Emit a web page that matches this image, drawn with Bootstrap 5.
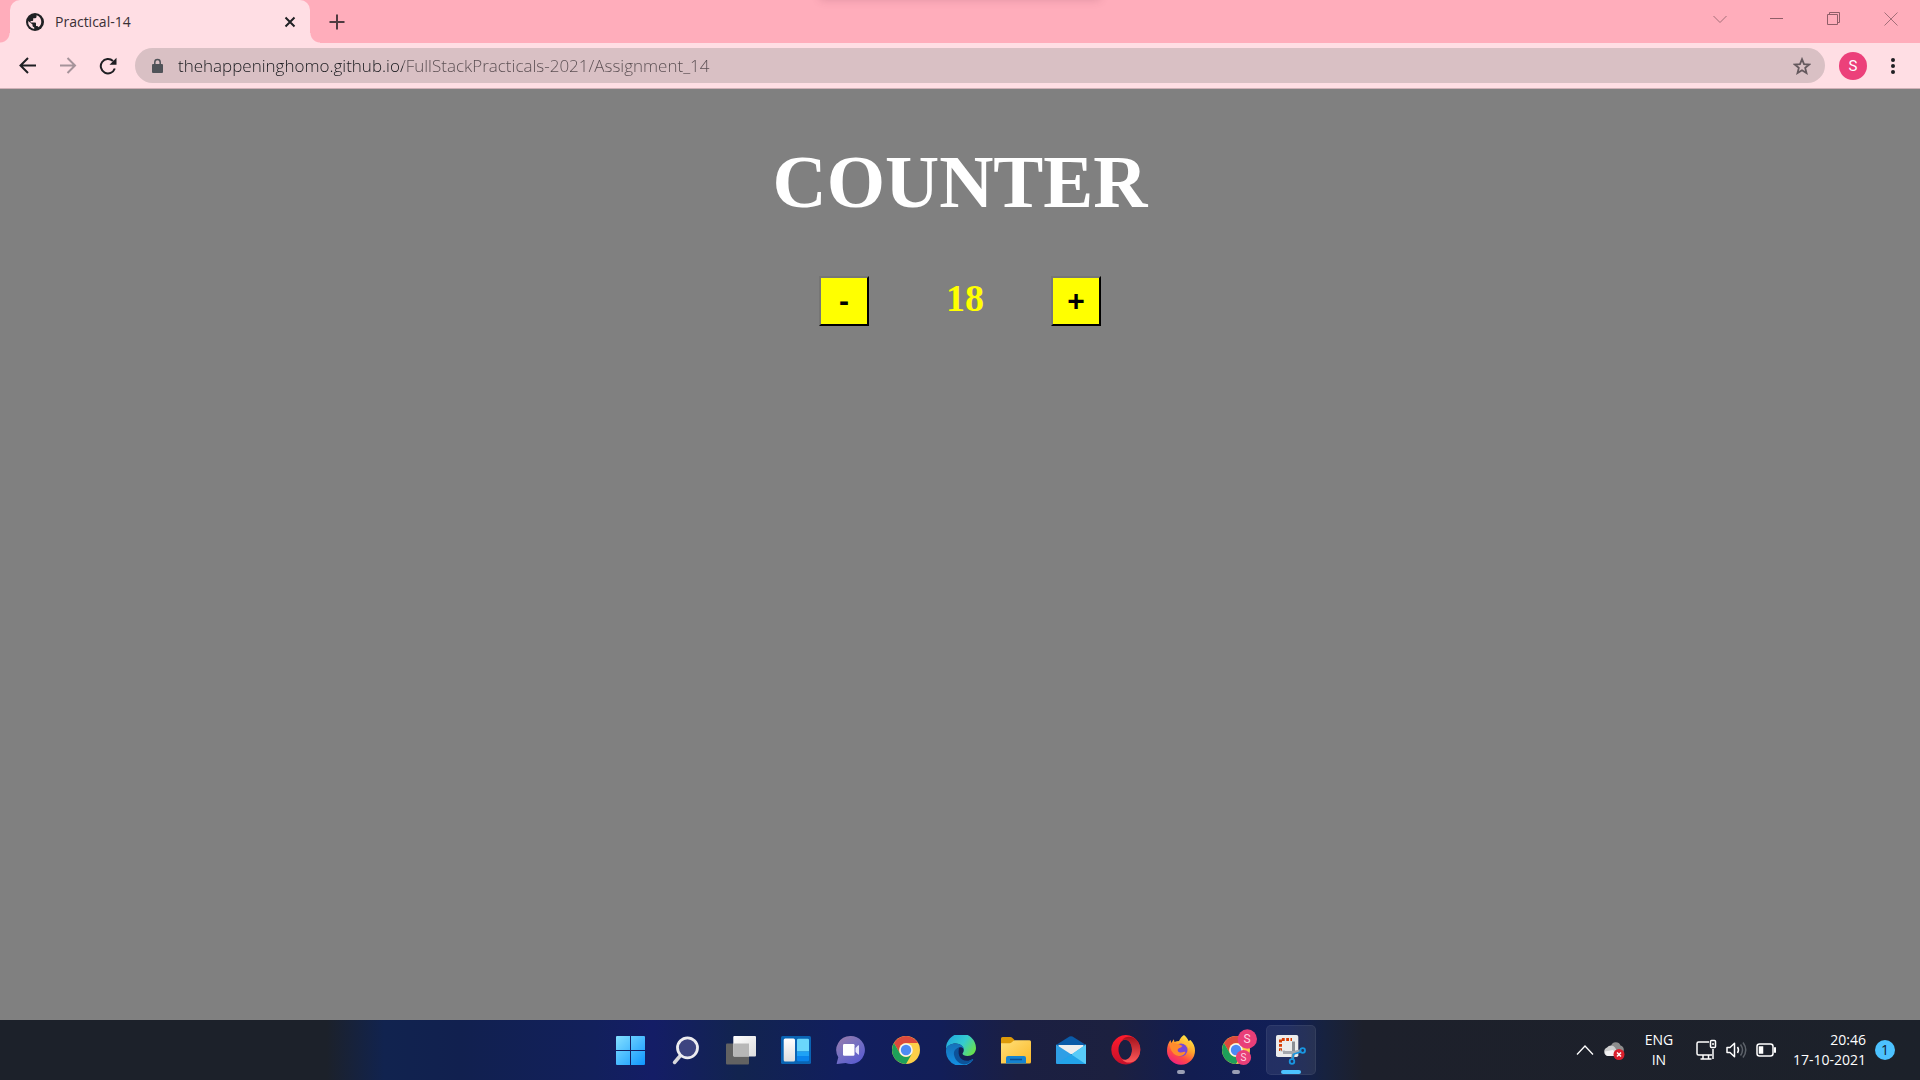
<!DOCTYPE html>
<html lang="en">
<head>
<meta charset="utf-8">
<meta name="viewport" content="width=device-width, initial-scale=1">
<title>Practical-14</title>
<link href="https://cdn.jsdelivr.net/npm/bootstrap@5.3.0/dist/css/bootstrap.min.css" rel="stylesheet">
<style>
  :root { --strip: #ffadbb; --bar: #ffdee4; --pill: #d9c0c4; }
  body { font-family: "Open Sans", "Noto Sans", sans-serif; background: gray; }
  svg { display: block; flex: none; }
  .plain { border: 0; background: none; padding: 0; color: inherit; }

  /* tab strip */
  .tab-strip { background: var(--strip); height: 43px; padding: 0 1px 0 10px; }
  .strip-shadow { top: -10px; left: 50%; width: 280px; height: 10px; margin-left: -140px; box-shadow: 0 0 8px rgba(120,60,80,.22); }
  .browser-tab { width: 300px; background: var(--bar); border-radius: 10px 10px 0 0; padding: 0 14px 0 16px; }
  .browser-tab::before, .browser-tab::after { content: ""; position: absolute; bottom: 0; width: 10px; height: 10px; }
  .browser-tab::before { left: -10px; background: radial-gradient(circle at 0 0, transparent 9px, var(--bar) 10px); }
  .browser-tab::after { right: -10px; background: radial-gradient(circle at 100% 0, transparent 9px, var(--bar) 10px); }
  .tab-title { font-size: 14px; line-height: 20px; color: #3a2f35; margin-left: 11px; }
  .new-tab { width: 54px; color: #4f3a40; }
  .win-btn { width: 57px; height: 37px; color: #a46f79; }

  /* toolbar */
  .tool-bar { background: var(--bar); border-bottom: 1px solid #cfb0b6; padding: 5px 5px 5px 8px; color: #1f1f23; }
  .nav-btn { width: 40px; height: 35px; }
  .url-pill { background: var(--pill); border-radius: 18px; height: 35px; margin-left: 7px; padding: 0 14px 0 16px; }
  .url-box { font-size: 17px; font-weight: 340; line-height: 24px; margin-left: 15px; outline: 0; color: transparent; min-width: 0;
    background: linear-gradient(90deg, #18191d 225px, #584c50 225px); -webkit-background-clip: text; background-clip: text; }
  .avatar { width: 28px; height: 28px; border-radius: 50%; background: #ec407a; color: #fff; font: 15px/28px Roboto, sans-serif; margin-left: 14px; }

  /* counter page */
  .page-title { font: bold 75px/86px "Liberation Serif", serif; color: #fff; margin: 50px 0 51px; }
  .count { font: bold 38px/44px "Liberation Serif", serif; color: #ff0; margin: 0 67px 0 77px; }
  .step-btn { width: 50px; height: 50px; background: #ff0; border: 2px outset #767676; border-right-color: #222; border-bottom-color: #222; color: #000; padding: 0;
    font: bold 30px/34px "Liberation Sans", sans-serif; }

  /* taskbar */
  .task-bar { height: 60px; color: #fff; display: grid; grid-template-columns: 1fr auto 1fr;
    background: linear-gradient(90deg, #1c212a 0, #1c212a 17%, #11234f 20%, #11204f 24%, #12205c 31%, #141d66 34%, #12244f 38.5%, #111e5e 44%, #121e58 49%, #1b1f42 53%, #1c203f 58%, #121d51 62%, #111f57 67%, #17223f 69%, #1d202b 71%, #1c212a 100%); }
  .apps { gap: 5px; padding-left: 2px; }
  .app-btn { width: 50px; height: 50px; border-radius: 5px; }
  .app-btn.current { background: rgba(255,255,255,.08); box-shadow: inset 0 0 0 1px rgba(255,255,255,.06); }
  .app-btn.open::after { content: ""; position: absolute; left: 21px; bottom: 1px; width: 8px; height: 4px; border-radius: 2px; background: #9a9fb5; }
  .app-btn.current::after { left: 15px; width: 20px; background: #4cc2ff; }
  .tray { font-size: 14px; line-height: 20px; padding-right: 25px; }
  .tray-lang { width: 30px; margin: 0 22px 0 18px; }
  .tray-time { margin-left: 17px; }
  .notice { width: 20px; height: 20px; border-radius: 50%; background: #4cc2ff; color: #102030; margin-left: 9px; }
</style>
<script src="https://cdn.jsdelivr.net/npm/bootstrap@5.3.0/dist/js/bootstrap.bundle.min.js"></script>
</head>
<body class="min-vh-100 d-flex flex-column m-0">

<header>
  <div class="tab-strip d-flex position-relative overflow-hidden">
    <div class="strip-shadow position-absolute"></div>
    <div class="browser-tab position-relative d-flex align-items-center">
      <svg width="18" height="18" viewBox="0 0 18 18"><circle cx="9" cy="9" r="9" fill="#202124"/><path d="M10.500 2.200v1.500q0 1.600-1.700 1.600H7.200v1.700q0 .9-.9.900H4.600v1.700h4.500q.9 0 .9.900v2.500h.9q1.200 0 1.700 1.200A6.900 6.900 0 0 0 10.500 2.200zM2.200 8A7 7 0 0 0 8.200 15.900V14.200q-1.700 0-1.700-1.700v-.9z" fill="#ffdee4"/></svg>
      <span class="tab-title flex-grow-1">Practical-14</span>
      <button class="plain" aria-label="Close tab"><svg width="12" height="12" viewBox="0 0 12 12" stroke="#202124" stroke-width="2"><path d="M1.500 1.500l9 9m0-9l-9 9"/></svg></button>
    </div>
    <button class="plain new-tab d-flex align-items-center justify-content-center" aria-label="New tab"><svg width="16" height="16" viewBox="0 0 16 16" stroke="currentColor" stroke-width="2"><path d="M8 .5v15M.5 8h15"/></svg></button>
    <div class="d-flex ms-auto">
      <button class="plain win-btn d-flex align-items-center justify-content-center" aria-label="Search tabs"><svg width="14" height="14" viewBox="0 0 14 14" fill="none" stroke="currentColor"><path d="M.5 4l6.500 6.500L13.500 4"/></svg></button>
      <button class="plain win-btn d-flex align-items-center justify-content-center" aria-label="Minimize"><svg width="14" height="14" viewBox="0 0 14 14" stroke="#8f5e68"><path d="M0 6.500h13"/></svg></button>
      <button class="plain win-btn d-flex align-items-center justify-content-center" aria-label="Restore"><svg width="14" height="14" viewBox="0 0 14 14" fill="none" stroke="#8f5e68"><path d="M.5 2.500h10v10H.5zM2.500 2V.5h10v10H11"/></svg></button>
      <button class="plain win-btn d-flex align-items-center justify-content-center" aria-label="Close"><svg width="14" height="14" viewBox="0 0 14 14" stroke="currentColor"><path d="M.5.5l13 13m0-13l-13 13"/></svg></button>
    </div>
  </div>

  <div class="tool-bar d-flex align-items-center">
    <button class="plain nav-btn d-flex align-items-center justify-content-center" aria-label="Back"><svg width="18" height="18" viewBox="0 0 18 18" fill="none" stroke="currentColor" stroke-width="2"><path d="M17 8.500H2M9 1L1.500 8.500 9 16"/></svg></button>
    <button class="plain nav-btn d-flex align-items-center justify-content-center" aria-label="Forward"><svg width="18" height="18" viewBox="0 0 18 18" fill="none" stroke="#a5939a" stroke-width="2"><path d="M1 8.500h15M8.500 1L16 8.500 8.500 16"/></svg></button>
    <button class="plain nav-btn d-flex align-items-center justify-content-center" aria-label="Reload"><svg width="18" height="18" viewBox="0 0 18 18"><path d="M15.800 11.500A7.200 7.200 0 1 1 14 4" fill="none" stroke="currentColor" stroke-width="2"/><path d="M17.500.8v7h-7z" fill="currentColor"/></svg></button>
    <div class="url-pill d-flex flex-grow-1 align-items-center">
      <svg width="12" height="16" viewBox="0 0 12 16"><rect x="1" y="6" width="11" height="9" rx="1" fill="#505359"/><path d="M3.800 7V4.200a2.700 2.700 0 0 1 5.400 0V7" fill="none" stroke="#505359" stroke-width="1.500"/></svg>
      <input class="plain url-box flex-grow-1" type="text" aria-label="Address" spellcheck="false" value="thehappeninghomo.github.io/FullStackPracticals-2021/Assignment_14">
      <button class="plain" aria-label="Bookmark this page"><svg width="18" height="18" viewBox="0 0 18 18" fill="none" stroke="#65595e" stroke-width="1.800"><path d="M9 2.200l2 4.900 5.200.4-4 3.400 1.300 5.100L9 13.200 4.500 16l1.300-5.100-4-3.400 5.200-.4z"/></svg></button>
    </div>
    <button class="plain avatar text-center" aria-label="Profile">S</button>
    <button class="plain d-flex justify-content-center ms-2 me-1 px-3" aria-label="Menu"><svg width="4" height="18" viewBox="0 0 4 18" fill="currentColor"><circle cx="2" cy="3" r="2"/><circle cx="2" cy="9" r="2"/><circle cx="2" cy="15" r="2"/></svg></button>
  </div>
</header>

<main class="flex-grow-1 text-center">
  <h1 class="page-title">COUNTER</h1>
  <div class="d-flex justify-content-center">
    <button class="step-btn" id="minus">-</button>
    <h2 class="count" id="count">18</h2>
    <button class="step-btn" id="plus">+</button>
  </div>
</main>

<footer class="task-bar align-items-center">
  <div></div>
  <nav class="apps d-flex" aria-label="Taskbar">
    <button class="plain app-btn d-flex align-items-center justify-content-center" aria-label="Start"><svg width="30" height="30" viewBox="0 0 30 30"><defs><linearGradient id="win" gradientUnits="userSpaceOnUse" x1="0" y1="0" x2="29" y2="30"><stop stop-color="#86e1ff"/><stop offset="1" stop-color="#0f97ff"/></linearGradient></defs><path fill="url(#win)" d="M0 2q0-1 1-1h13v14H0zM15 1h13q1 0 1 1v13H15zM0 16h14v14H1q-1 0-1-1zM15 16h14v13q0 1-1 1H15z"/></svg></button>
    <button class="plain app-btn d-flex align-items-center justify-content-center" aria-label="Search"><svg width="30" height="30" viewBox="0 0 30 30"><path d="M9.500 20.500L3.500 27.500" stroke="#d8d8dc" stroke-width="3.500" stroke-linecap="round"/><circle cx="16.500" cy="12.800" r="10" fill="#3d4480" stroke="#ececf0" stroke-width="2.800"/></svg></button>
    <button class="plain app-btn d-flex align-items-center justify-content-center" aria-label="Task view"><svg width="30" height="30" viewBox="0 0 30 30"><defs><linearGradient id="tv" x1="0" y1="0" x2="1" y2="1"><stop stop-color="#fff"/><stop offset="1" stop-color="#dcdcdc"/></linearGradient></defs><rect y="8.500" width="23" height="21" rx="1" fill="#626262"/><rect x="7.300" y="1" width="22.700" height="20.500" rx="1" fill="url(#tv)"/><path d="M7.300 8.500H23v13H8q-.7 0-.7-.7z" fill="#b7b7b7"/></svg></button>
    <button class="plain app-btn d-flex align-items-center justify-content-center" aria-label="Widgets"><svg width="30" height="30" viewBox="0 0 30 30"><defs><linearGradient id="wg" x2="0" y2="1"><stop stop-color="#fff"/><stop offset="1" stop-color="#dedede"/></linearGradient></defs><rect y="1" width="30" height="28" rx="1.500" fill="#0a64b4"/><rect x="2.700" y="3.500" width="11.300" height="23" rx="1.500" fill="url(#wg)"/><path d="M16 5q0-1.300 1.300-1.300h9.400Q28 3.700 28 5v11.500H16z" fill="#6bd6fb"/><path d="M16 16.500h12V21H16z" fill="#1fa2f5"/><path d="M16 21h12v4q0 1.300-1.300 1.300h-9.400Q16 26.300 16 25z" fill="#0a84ec"/></svg></button>
    <button class="plain app-btn d-flex align-items-center justify-content-center" aria-label="Chat"><svg width="30" height="30" viewBox="0 0 30 30"><defs><linearGradient id="ch" x1="0" y1="0" x2=".7" y2="1"><stop stop-color="#9d7ca8"/><stop offset=".5" stop-color="#7670c0"/><stop offset="1" stop-color="#5b5cd0"/></linearGradient></defs><path d="M14.700 1a14 14 0 1 1-5 27L1.300 29q-.8 0-.6-.8l1.600-6A14 14 0 0 1 14.700 1z" fill="url(#ch)"/><rect x="7" y="9" width="11.500" height="11.700" rx="1.200" fill="#fff"/><path d="M19.500 13l2.700-2.700q.8-.5.8.5v8.200q0 1-.8.5L19.500 17z" fill="#e6e6fa"/></svg></button>
    <button class="plain app-btn d-flex align-items-center justify-content-center" aria-label="Chrome"><svg width="30" height="30" viewBox="0 0 30 30"><g id="chromeMark"><circle cx="15" cy="15" r="14" fill="#fdcf48"/><path d="M2.900 8A14 14 0 0 1 27.100 8H15a7 7 0 0 0-6 10.500z" fill="#dc4a3d"/><path d="M2.900 8A14 14 0 0 0 15 29l6.100-10.500a7 7 0 0 1-12.100 0z" fill="#1ea05a"/><circle cx="15" cy="15" r="6.800" fill="#f3f3f3"/><circle cx="15" cy="15" r="5.200" fill="#4c8bf5"/></g></svg></button>
    <button class="plain app-btn d-flex align-items-center justify-content-center" aria-label="Edge"><svg width="30" height="30" viewBox="0 0 30 30"><defs><linearGradient id="e1" y1=".2" y2=".7"><stop stop-color="#21a8e0"/><stop offset=".55" stop-color="#34cbd0"/><stop offset="1" stop-color="#6ae04a"/></linearGradient><linearGradient id="e2" x1="0" y1="0" x2="0" y2="1"><stop stop-color="#1670b8"/><stop offset="1" stop-color="#1391e4"/></linearGradient></defs><path d="M0 14A15 15 0 0 1 30 13c0 5-4 8-8.500 8-3 0-5-1-5-2.200 0-.8 1.300-1.500 1.300-3.800 0-3.500-3.500-6.500-8-6.500C5 8.500 1 11 0 14z" fill="url(#e1)"/><path d="M0 15c0-4 4.500-6.500 9.500-6.500 4.800 0 8.300 3 8.300 5.500-1-1.500-2.500-2-4-1.700-3 .7-4.800 4-3.800 7.700 1.200 5 6 8 12 6.500l4.500-2.200q1-.3.500.7A15 15 0 0 1 0 15z" fill="url(#e2)"/><path d="M13 12.500c-4 1-5.800 4.300-4.800 8 1 5 5.500 9 10.800 8.900A14 14 0 0 0 27.300 24c-6 3.500-12.300 1.500-14-3-1.200-3.300-.5-6.500-.3-8.500z" fill="#0d5299"/></svg></button>
    <button class="plain app-btn d-flex align-items-center justify-content-center" aria-label="File Explorer"><svg width="30" height="30" viewBox="0 0 30 30"><defs><linearGradient id="fo" x2="1" y2="1"><stop stop-color="#ffe07a"/><stop offset="1" stop-color="#fbb929"/></linearGradient></defs><path d="M0 3.500Q0 2 1.500 2h8q1 0 1.700.8L13.500 5v4H0z" fill="#dd9a0a"/><path d="M0 8.300h8.500q1.300 0 2.300-1l1.400-1.300q1-.8 2-.8h14.300q1.500 0 1.500 1.500v20.300q0 1.500-1.500 1.500H0z" fill="url(#fo)"/><path d="M5 28.500V23q0-2 2-2h16q2 0 2 2v5.500z" fill="#1583d0"/><path d="M9 24.500h12" stroke="#0a4f93" stroke-width="1.500"/></svg></button>
    <button class="plain app-btn d-flex align-items-center justify-content-center" aria-label="Mail"><svg width="30" height="30" viewBox="0 0 30 30"><path d="M0 10L13.500 1.600q1.500-.8 3 0L30 10v8H0z" fill="#0a5ba8"/><path d="M2.500 10h25v9H2.500z" fill="#eee"/><path d="M0 9.500l30 19.500H1q-1 0-1-1z" fill="#2f9fe6"/><path d="M30 9.500V28q0 1-1 1H1L15.500 19.500z" fill="#2bb4ee"/><path d="M30 9.500V28q0 .8-.7 1L15.500 19.500z" fill="#58cbf8"/><path d="M15 19.500l14.500 9.500H.8z" fill="#1e9ae6" opacity=".65"/></svg></button>
    <button class="plain app-btn d-flex align-items-center justify-content-center" aria-label="Opera"><svg width="30" height="30" viewBox="0 0 30 30"><defs><linearGradient id="op" y2="1" x2="0"><stop stop-color="#ff1b2d"/><stop offset="1" stop-color="#c5102a"/></linearGradient><linearGradient id="op2" y2="1" x2="0"><stop stop-color="#a5121d"/><stop offset="1" stop-color="#ff5a5a"/></linearGradient></defs><path fill-rule="evenodd" d="M14.800 0a14.500 14.700 0 1 0 .01 0zM14.800 4.500c4 0 6.200 5 6.200 10.200S18.800 25 14.800 25 7.500 20 7.500 14.700 10.800 4.500 14.800 4.500z" fill="url(#op)"/><path d="M11 5.300C14 1 20 .8 24.500 4a14.500 14.500 0 0 1 0 21.500C20 28.500 14 28.400 11 24.200c5 2.300 10-2.400 10-9.500S16 3 11 5.300z" fill="url(#op2)"/></svg></button>
    <button class="plain app-btn open position-relative d-flex align-items-center justify-content-center" aria-label="Firefox"><svg width="30" height="30" viewBox="0 0 30 30"><defs><linearGradient id="ff" x1=".8" x2=".25" y2="1"><stop stop-color="#fff04a"/><stop offset=".4" stop-color="#ffa62b"/><stop offset=".7" stop-color="#ff4a45"/><stop offset="1" stop-color="#ee1b85"/></linearGradient></defs><path d="M18 0c2 1.500 3.800 3.500 4.500 6l2-1c3 3 4.500 7 4.500 10.500A14 14 0 0 1 1 16c0-4.500 1.300-8.500 3.500-11l.8 3 2.500-3.700.7 2.700c1.500-.8 3-1 4.500-1 1.500-3 3-5 5-6z" fill="url(#ff)"/><circle cx="15" cy="15" r="6.500" fill="#7648d8"/><path d="M3.500 9c4-1.500 7-.5 10 .5l3 1.500c-1 2-3.500 1.500-4.500 3-1 2 .5 3.500 3 3.500s3-1 4.500-.5c-1 3-4 4.500-7 4-5-.8-8-5-9-12z" fill="#ff8b2c"/><path d="M15 8.500c4-1 7 2 7.500 5 2-2 1-5-.5-7.500z" fill="#ffc13a"/></svg></button>
    <button class="plain app-btn open position-relative d-flex align-items-center justify-content-center" aria-label="Chrome, profile S"><svg width="30" height="30" viewBox="0 0 30 30" overflow="visible" font-family="Roboto, sans-serif" fill="#ffd5e2" text-anchor="middle"><use href="#chromeMark"/><circle cx="26.300" cy="4" r="9.700" fill="#e93f78"/><text x="26" y="8" font-size="12">S</text><circle cx="22.500" cy="22.500" r="7.600" fill="#e93f78"/><text x="22.500" y="26" font-size="10">S</text></svg></button>
    <button class="plain app-btn open current position-relative d-flex align-items-center justify-content-center" aria-label="Snipping Tool"><svg width="30" height="30" viewBox="0 0 30 30" fill="none"><rect width="22.300" height="22" rx="1.800" fill="#ececec"/><path d="M4.500 16V4.500H16" stroke="#d83b01" stroke-width="3" stroke-dasharray="2.800 1.500"/><path d="M4.500 14.500V16H9" stroke="#bbb"/><path d="M17.500 6.500V18l-1 6" stroke="#8b8e94" stroke-width="3"/><path d="M7 17.500h11l6-1.500" stroke="#a5a8ad" stroke-width="3"/><circle cx="26.700" cy="15.500" r="2.300" stroke="#1996e0" stroke-width="1.800"/><circle cx="16" cy="26.500" r="2.300" stroke="#1996e0" stroke-width="1.800"/><path d="M18 19l6.500-2M17.500 18.500L17 24" stroke="#1996e0" stroke-width="1.600"/></svg></button>
  </nav>

  <div class="tray d-flex align-items-center justify-content-end">
    <button class="plain" aria-label="Show hidden icons"><svg width="18" height="12" viewBox="0 0 18 12" fill="none" stroke="#fff" stroke-width="1.300"><path d="M1 10.500l8-8.500 8 8.500"/></svg></button>
    <svg class="ms-2" width="24" height="20" viewBox="0 0 24 20"><path d="M9 6a5 5 0 0 1 9.500-.5A4.500 4.500 0 0 1 19 14H9z" fill="#8d8d8d"/><path d="M5.500 16a4.500 4.500 0 0 1-.5-8.500 5 5 0 0 1 8 0L18 16z" fill="#cfcfcf"/><path d="M3 11.500L11 10l5 6H6q-3-.5-3-4.500z" fill="#f3f3f3"/><circle cx="17" cy="14.500" r="5.500" fill="#d9202c"/><path d="M15 12.500l4 4m0-4l-4 4" stroke="#fff" stroke-width="1.500"/></svg>
    <div class="tray-lang text-center">ENG<br>IN</div>
    <svg width="80" height="22" viewBox="0 0 80 22" fill="none" stroke="#fff" stroke-width="1.500"><path d="M13 3H2.500Q1 3 1 4.500v10Q1 16 2.500 16H16M17 10v10M4.500 20h11M7 16v4M12.500 16v4"/><rect x="14.500" y="1.500" width="5" height="7" rx="1"/><path d="M16 5h2"/><path d="M31 8.500h3l4.500-4.200v13.400L34 13.500h-3z" stroke-linejoin="round"/><path d="M41.500 8q2 3 0 6"/><path d="M44.500 5.500q4 5.500 0 11M47 3.500q5.500 7.500 0 15" stroke="#5d626a"/><rect x="61" y="5" width="16" height="12" rx="2.500"/><path d="M78 9h1.500v4H78" fill="#fff"/><path d="M63.500 8h3v6h-3z" fill="#fff"/></svg>
    <time class="tray-time text-end" datetime="2021-10-17T20:46">20:46<br>17-10-2021</time>
    <button class="plain notice text-center" aria-label="1 notification">1</button>
  </div>
</footer>

<script>
  const out = document.getElementById('count');
  document.getElementById('minus').onclick = () => out.textContent = +out.textContent - 1;
  document.getElementById('plus').onclick = () => out.textContent = +out.textContent + 1;
</script>
</body>
</html>
